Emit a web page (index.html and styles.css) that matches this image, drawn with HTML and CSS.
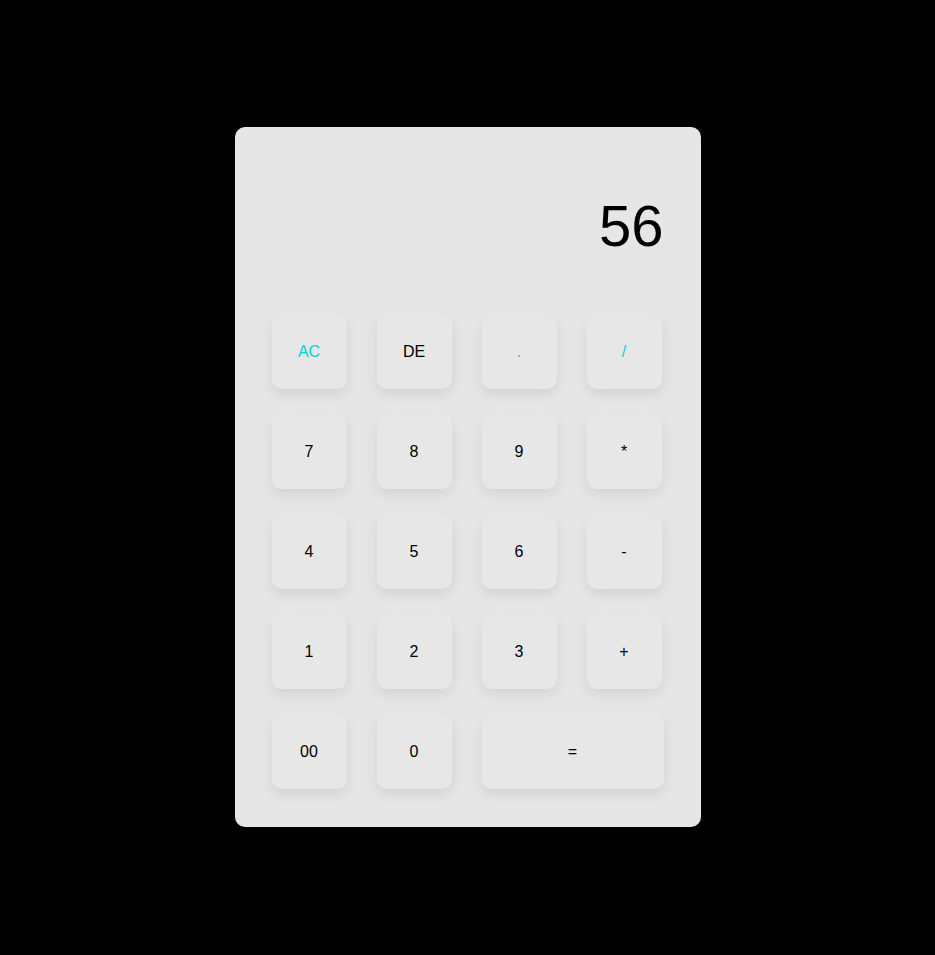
FILE: index.html
```html
<!DOCTYPE html>
<html lang="en">
<head>
<meta charset="utf-8">
<title>Calculator</title>
<link rel="stylesheet" href="styles.css">
</head>
<body>
<div class="calculator">
  <div class="display">56</div>
  <div class="keys">
    <button class="key accent">AC</button>
    <button class="key">DE</button>
    <button class="key accent">.</button>
    <button class="key accent">/</button>
    <button class="key">7</button>
    <button class="key">8</button>
    <button class="key">9</button>
    <button class="key">*</button>
    <button class="key">4</button>
    <button class="key">5</button>
    <button class="key">6</button>
    <button class="key">-</button>
    <button class="key">1</button>
    <button class="key">2</button>
    <button class="key">3</button>
    <button class="key">+</button>
    <button class="key">00</button>
    <button class="key">0</button>
    <button class="key equal">=</button>
  </div>
</div>
</body>
</html>
```

FILE: styles.css
```css
html, body {
  margin: 0;
  padding: 0;
}
body {
  background: #000;
  box-sizing: border-box;
  min-height: 100vh;
  padding-bottom: 1px;
  display: flex;
  align-items: center;
  justify-content: center;
  font-family: "Liberation Sans", Arial, sans-serif;
}
.calculator {
  box-sizing: border-box;
  width: 466px;
  height: 700px;
  background: #e6e6e6;
  border-radius: 10px;
  padding: 69px 39px 38px 37px;
}
.display {
  height: 60px;
  line-height: 60px;
  font-size: 58px;
  text-align: right;
  color: #000;
  margin-right: -2px;
  margin-bottom: 58px;
}
.keys {
  display: grid;
  grid-template-columns: repeat(4, 75px);
  grid-auto-rows: 75px;
  column-gap: 30px;
  row-gap: 25px;
}
.key {
  border: none;
  outline: none;
  margin: 0;
  padding: 0;
  background: #e7e7e7;
  border-radius: 10px;
  font-family: "Liberation Sans", Arial, sans-serif;
  font-size: 16px;
  color: #000;
  box-shadow: 0 5px 14px rgba(0, 0, 0, 0.09), -3px -3px 10px rgba(255, 255, 255, 0.15);
}
.accent {
  color: #00d2d4;
}
.equal {
  grid-column: span 2;
  width: 182px;
}
```
